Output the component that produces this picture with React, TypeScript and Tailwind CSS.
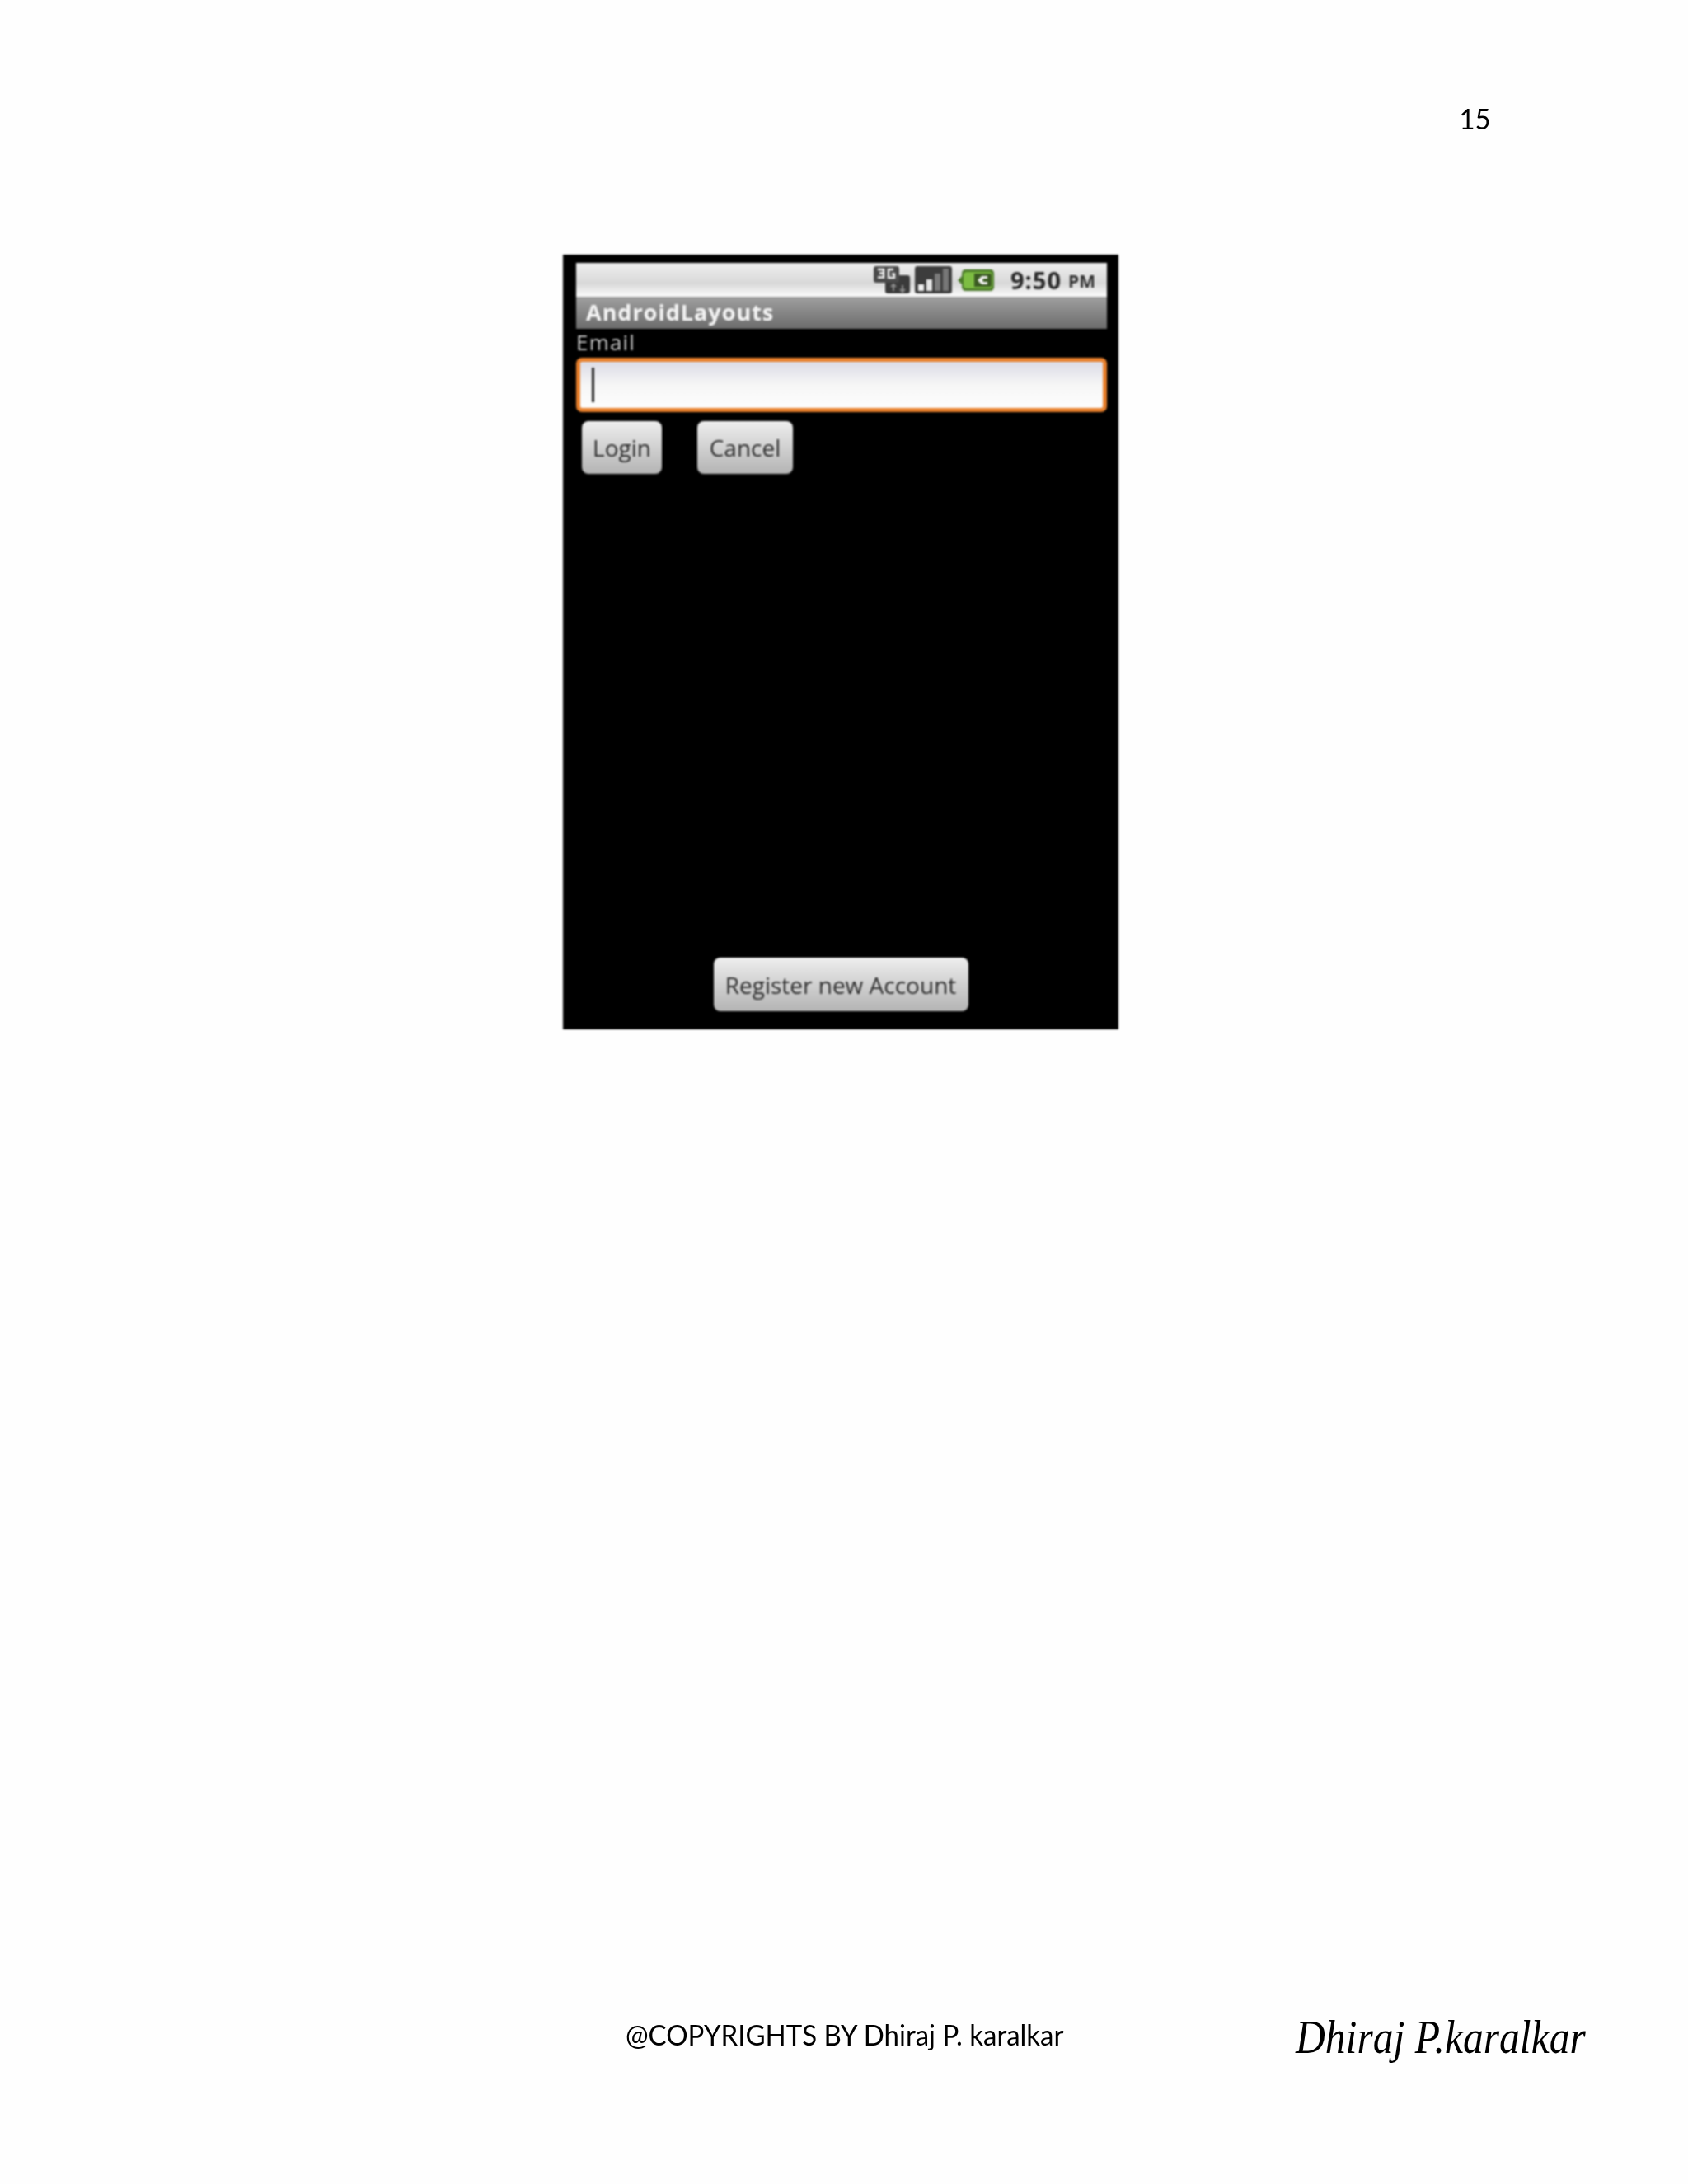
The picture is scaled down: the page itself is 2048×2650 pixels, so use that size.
import React from "react";

const ThreeGIcon = () => (
  <svg width="44" height="33" viewBox="0 0 44 33">
    <rect x="14" y="11" width="30" height="22" rx="3" fill="#3a3a3a" />
    <rect x="0" y="0" width="31" height="20" rx="3" fill="#4a4a4a" />
    <path d="M5 4h7v4.500H7M12 8.500v5H5" fill="none" stroke="#f2f2f2" strokeWidth="2.400" />
    <path d="M24 4h-6v10h7V9.500h-3" fill="none" stroke="#f2f2f2" strokeWidth="2.400" />
    <path d="M21 25l3-3 3 3M24 22v8M32 28l3 3 3-3M35 31v-8" fill="none" stroke="#8b8b8b" strokeWidth="2" />
  </svg>
);

const SignalIcon = () => (
  <svg width="45" height="33" viewBox="0 0 45 33">
    <rect x="0" y="0" width="45" height="33" rx="3" fill="#3c3c3c" />
    <rect x="4" y="22" width="7" height="8" fill="#f0f0f0" />
    <rect x="14" y="16" width="7" height="14" fill="#e4e4e4" />
    <rect x="24" y="9" width="7" height="21" fill="#7a7a7a" />
    <rect x="34" y="3" width="7" height="27" fill="#777777" />
  </svg>
);

const BatteryIcon = () => (
  <svg width="44" height="26" viewBox="0 0 44 26">
    <path d="M0 13l5-5V5q0-5 5-5h29q5 0 5 5v16q0 5-5 5H10q-5 0-5-5v-3z" fill="#4a7a28" />
    <rect x="7" y="3" width="35" height="20" rx="4" fill="#7dbd42" />
    <path d="M20 5h19q2 0 2 2v12q0 2-2 2H20z" fill="#3a5a22" />
    <path d="M36 8h-7l-5 5 5 5h7v-3h-5l-1-2 1-2h5z" fill="#f4f4f4" />
  </svg>
);

const GreyButton = ({ label, className }: { label: string; className: string }) => (
  <div
    className={`flex items-center justify-center rounded-[8px] border-t-2 border-[#f2f2f2] bg-gradient-to-b from-[#ececec] to-[#b4b4b4] pb-[2px] text-[28px] font-medium text-[#2e2e2e] [font-family:'Open_Sans',sans-serif] ${className}`}
  >
    {label}
  </div>
);

export default function App() {
  return (
    <div className="flex h-[2650px] w-[2048px] flex-col bg-[#fefefe] [font-family:'Lato',sans-serif] text-black">
      {/* page number */}
      <div className="flex justify-end pr-[239px] pt-[121px] text-[35px] leading-[44px]">
        <span className="inline-block origin-right scale-x-[0.94]">15</span>
      </div>

      {/* emulator screenshot */}
      <div className="ml-[683px] mt-[144px] flex h-[940px] w-[674px] flex-col bg-black pl-[16px] pr-[14px] pt-[10px] blur-[1px]">
        <div className="flex h-[41px] items-center justify-end bg-gradient-to-b from-[#f0f0f0] via-[#d8d8d8] via-60% to-[#fcfcfc] pr-[14px]">
          <div className="mr-[6px]">
            <ThreeGIcon />
          </div>
          <div className="mr-[7px]">
            <SignalIcon />
          </div>
          <BatteryIcon />
          <span className="ml-[20px] text-[29px] font-bold tracking-[1px] text-[#2a2a2a] [font-family:'Open_Sans',sans-serif]">
            9:50
          </span>
          <span className="ml-[8px] mt-[5px] text-[21px] font-bold text-[#333333] [font-family:'Open_Sans',sans-serif]">
            PM
          </span>
        </div>
        <div className="flex h-[39px] items-center bg-gradient-to-b from-[#a0a0a0] to-[#6c6c6c] pl-[12px] text-[27px] font-bold tracking-[1px] text-[#f4f4f4] [font-family:'Open_Sans',sans-serif]">
          AndroidLayouts
        </div>
        <div className="h-[35px] text-[26px] leading-[32px] tracking-[1.200px] text-[#c4c4c4] [font-family:'Open_Sans',sans-serif]">
          Email
        </div>
        <div className="flex h-[66px] items-center rounded-[7px] border-[5px] border-[#e8802c] bg-gradient-to-b from-[#dcdce6] via-[#f6f6f6] to-[#fdfdfd] pl-[14px]">
          <div className="h-[42px] w-[3px] bg-[#222222]" />
        </div>
        <div className="mt-[11px] flex pl-[7px]">
          <GreyButton label="Login" className="h-[64px] w-[97px]" />
          <GreyButton label="Cancel" className="ml-[43px] h-[64px] w-[116px]" />
        </div>
        <div className="mt-auto flex justify-center pb-[22px] pr-[2px]">
          <GreyButton label="Register new Account" className="h-[65px] w-[309px]" />
        </div>
      </div>

      {/* footer */}
      <div className="mt-auto flex items-end pb-[148px] pl-[759px]">
        <span className="mb-[12px] inline-block origin-left scale-x-[0.943] text-[35px] leading-[44px]">
          @COPYRIGHTS BY Dhiraj P. karalkar
        </span>
        <span className="ml-[249px] inline-block origin-left scale-x-[0.855] text-[58px] font-normal italic leading-[60px] [font-family:'Liberation_Serif',serif]">
          Dhiraj P.karalkar
        </span>
      </div>
    </div>
  );
}
